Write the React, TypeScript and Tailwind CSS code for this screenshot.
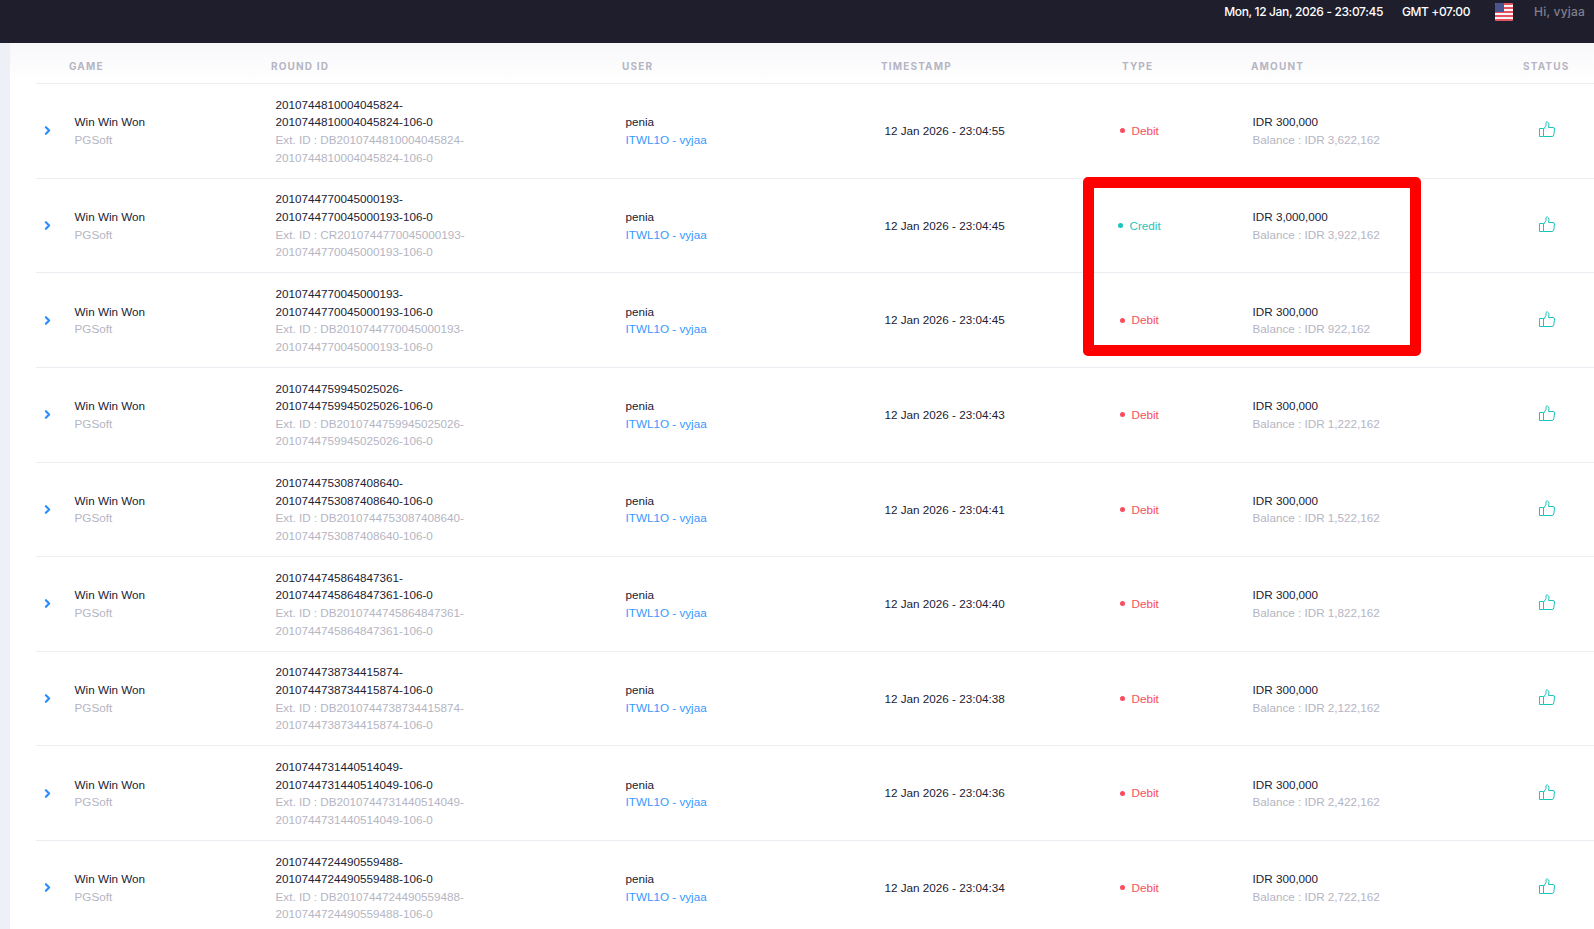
import { ChevronRight } from "lucide-react";

type Row = {
  id: string;
  time: string;
  type: "Debit" | "Credit";
  amount: string;
  balance: string;
};

const rows: Row[] = [
  { id: "2010744810004045824", time: "12 Jan 2026 - 23:04:55", type: "Debit", amount: "IDR 300,000", balance: "IDR 3,622,162" },
  { id: "2010744770045000193", time: "12 Jan 2026 - 23:04:45", type: "Credit", amount: "IDR 3,000,000", balance: "IDR 3,922,162" },
  { id: "2010744770045000193", time: "12 Jan 2026 - 23:04:45", type: "Debit", amount: "IDR 300,000", balance: "IDR 922,162" },
  { id: "2010744759945025026", time: "12 Jan 2026 - 23:04:43", type: "Debit", amount: "IDR 300,000", balance: "IDR 1,222,162" },
  { id: "2010744753087408640", time: "12 Jan 2026 - 23:04:41", type: "Debit", amount: "IDR 300,000", balance: "IDR 1,522,162" },
  { id: "2010744745864847361", time: "12 Jan 2026 - 23:04:40", type: "Debit", amount: "IDR 300,000", balance: "IDR 1,822,162" },
  { id: "2010744738734415874", time: "12 Jan 2026 - 23:04:38", type: "Debit", amount: "IDR 300,000", balance: "IDR 2,122,162" },
  { id: "2010744731440514049", time: "12 Jan 2026 - 23:04:36", type: "Debit", amount: "IDR 300,000", balance: "IDR 2,422,162" },
  { id: "2010744724490559488", time: "12 Jan 2026 - 23:04:34", type: "Debit", amount: "IDR 300,000", balance: "IDR 2,722,162" },
];

function Flag() {
  return (
    <svg width="18" height="18" viewBox="0 0 18 18" className="rounded-[2px]">
      <rect width="18" height="18" fill="#f5f5f5" />
      <rect y="0" width="18" height="2" fill="#e8505f" />
      <rect y="4" width="18" height="2" fill="#e8505f" />
      <rect y="8" width="18" height="2" fill="#e8505f" />
      <rect y="12" width="18" height="2" fill="#e8505f" />
      <rect y="16" width="18" height="2" fill="#e8505f" />
      <rect width="9" height="9" fill="#4a5590" />
    </svg>
  );
}

function Thumb() {
  return (
    <svg width="16" height="16" viewBox="0 0 16 16" fill="none" stroke="#1bc5bd" strokeWidth="1" strokeLinejoin="round">
      <rect x="0.5" y="7.5" width="4" height="8" />
      <path d="M4.5 8.5 L7 4.5 L7 1.5 Q7.5 0.7 8.5 1 Q10 1.6 10 3.5 L9.5 6.5 H14 Q15.5 6.5 15.5 8 L14.8 13.8 Q14.6 15.5 13 15.5 H4.5" />
    </svg>
  );
}

function TableRow({ row }: { row: Row }) {
  const prefix = row.type === "Credit" ? "CR" : "DB";
  const credit = row.type === "Credit";
  return (
    <div className="flex h-[94.6px] items-center border-b border-[#ebedf2] text-[11.7px] leading-[17.55px] text-[#212135]">
      <div className="w-[38.5px] pl-[5px] text-[#2b8cff]">
        <ChevronRight size={13} strokeWidth={4} />
      </div>
      <div className="w-[201px]">
        <div>Win Win Won</div>
        <div className="text-[#b5b5c3]">PGSoft</div>
      </div>
      <div className="w-[350px]">
        <div>{row.id}-</div>
        <div>{row.id}-106-0</div>
        <div className="text-[#b5b5c3]">Ext. ID : {prefix}{row.id}-</div>
        <div className="text-[#b5b5c3]">{row.id}-106-0</div>
      </div>
      <div className="w-[259px]">
        <div>penia</div>
        <div className="text-[#3699ff]">ITWL1O - vyjaa</div>
      </div>
      <div className="w-[233px]">{row.time}</div>
      <div className={`flex w-[135px] items-center gap-[7px] ${credit ? "pl-0 text-[#1bc5bd]" : "pl-[2px] text-[#f64e60]"}`}>
        <span className={`size-[5px] rounded-full ${credit ? "bg-[#1bc5bd]" : "bg-[#f64e60]"}`} />
        {row.type}
      </div>
      <div className="w-[286.5px]">
        <div>{row.amount}</div>
        <div className="text-[#b5b5c3]">Balance : {row.balance}</div>
      </div>
      <div className="-mt-[3px]">
        <Thumb />
      </div>
    </div>
  );
}

export default function App() {
  return (
    <div className="relative flex h-screen flex-col overflow-hidden bg-white font-['Liberation_Sans',sans-serif]">
      <header className="flex h-[43px] shrink-0 items-start justify-end bg-[#1e1e2d] pr-[9px] pt-[3px] font-['Inter',sans-serif] text-xs font-medium leading-[18px]">
        <span className="text-white tracking-[-0.36px]">Mon, 12 Jan, 2026 - 23:07:45</span>
        <span className="ml-[19px] text-white tracking-[-0.4px]">GMT +07:00</span>
        <span className="ml-[25px]"><Flag /></span>
        <span className="ml-[21px] tracking-[0.2px] text-[#80808f]">Hi, vyjaa</span>
      </header>
      <div className="flex flex-1">
        <aside className="w-[10px] shrink-0 bg-[#eef0f8]" />
        <main className="flex-1 bg-white">
          <div className="bg-gradient-to-b from-[#f8f8fb] to-white pl-[26px]">
            <div className="flex h-[41.2px] items-center border-b border-[#ebedf2] pt-[6px] font-['Inter',sans-serif] text-[10px] font-bold uppercase tracking-[1.15px] text-[#b5b5c3]">
              <div className="w-[235px] pl-[33px]">Game</div>
              <div className="w-[351px]">Round ID</div>
              <div className="w-[259px]">User</div>
              <div className="w-[241px]">Timestamp</div>
              <div className="w-[129px]">Type</div>
              <div className="w-[272px]">Amount</div>
              <div>Status</div>
            </div>
          </div>
          <div className="ml-[26px]">
            {rows.map((row, i) => (
              <TableRow key={i} row={row} />
            ))}
          </div>
        </main>
      </div>
      {/* annotation drawn over the screenshot */}
      <div className="absolute left-[1083px] top-[177px] h-[179px] w-[338px] rounded-[5px] border-[11px] border-[#ff0000]" />
    </div>
  );
}
